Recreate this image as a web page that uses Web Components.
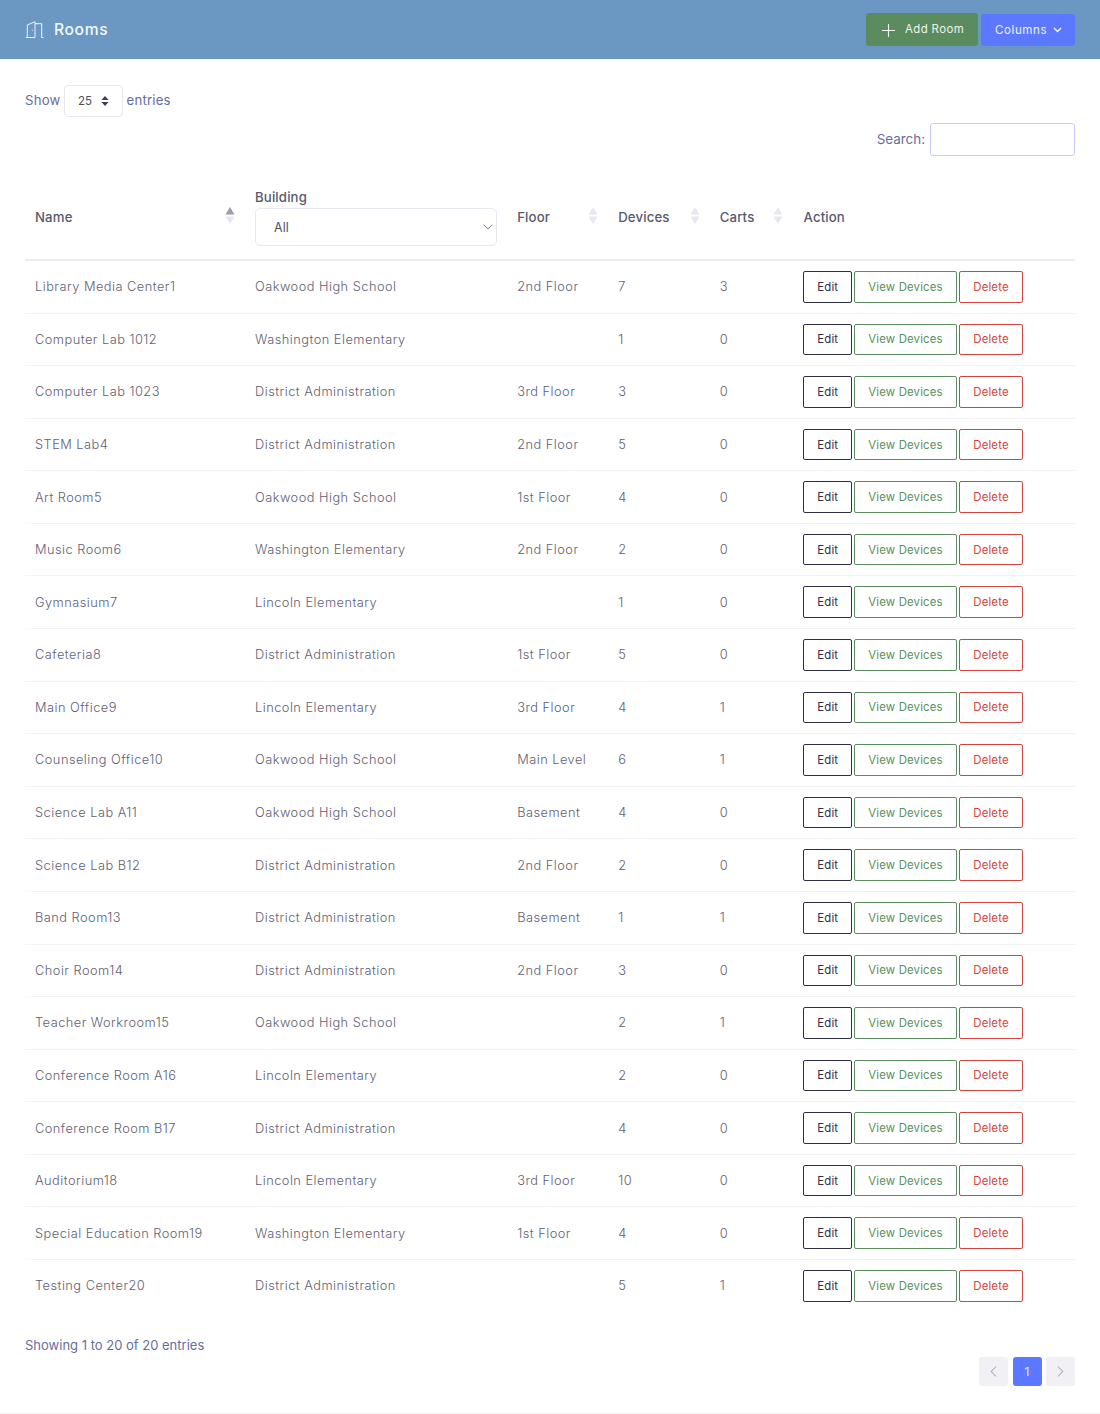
<!DOCTYPE html>
<html><head><meta charset="utf-8">
<style>html,body{margin:0;padding:0;background:#fff}body{font-family:Inter,"Liberation Sans",sans-serif}</style>
</head><body>
<rooms-app></rooms-app>
<script>
const FONT='Inter,"Liberation Sans",sans-serif';
const COLS='220px 262.2px 101px 101.5px 83.8px 281.5px';
const rows=[["Library Media Center1","Oakwood High School","2nd Floor","7","3"],["Computer Lab 1012","Washington Elementary","","1","0"],["Computer Lab 1023","District Administration","3rd Floor","3","0"],["STEM Lab4","District Administration","2nd Floor","5","0"],["Art Room5","Oakwood High School","1st Floor","4","0"],["Music Room6","Washington Elementary","2nd Floor","2","0"],["Gymnasium7","Lincoln Elementary","","1","0"],["Cafeteria8","District Administration","1st Floor","5","0"],["Main Office9","Lincoln Elementary","3rd Floor","4","1"],["Counseling Office10","Oakwood High School","Main Level","6","1"],["Science Lab A11","Oakwood High School","Basement","4","0"],["Science Lab B12","District Administration","2nd Floor","2","0"],["Band Room13","District Administration","Basement","1","1"],["Choir Room14","District Administration","2nd Floor","3","0"],["Teacher Workroom15","Oakwood High School","","2","1"],["Conference Room A16","Lincoln Elementary","","2","0"],["Conference Room B17","District Administration","","4","0"],["Auditorium18","Lincoln Elementary","3rd Floor","10","0"],["Special Education Room19","Washington Elementary","1st Floor","4","0"],["Testing Center20","District Administration","","5","1"]];
function def(name,html,after){customElements.define(name,class extends HTMLElement{constructor(){super();this.attachShadow({mode:'open'});}connectedCallback(){this.shadowRoot.innerHTML=typeof html==='function'?html(this):html;if(after)after(this)}})}

def('top-bar',`<style>:host{display:flex;align-items:center;height:59px;background:#6b98c2;padding:0 25px;box-sizing:border-box;font-family:${FONT}}
.t{display:flex;align-items:center;gap:10px;color:#f4f7fb;font-size:15.6px;font-weight:500;letter-spacing:.65px;margin-right:auto}
svg{display:block}
.add,.col{display:flex;align-items:center;box-sizing:border-box;border-radius:3px;color:#eef3ee;font-size:11.4px;letter-spacing:.4px}
.add{height:33px;width:112px;background:#5b8c5f;padding-left:16px;gap:10px;margin-right:3px;padding-bottom:2px}
.add svg{margin-top:3px}
.col{height:32px;width:94px;background:#5c78ff;padding-left:14px;gap:6px;font-size:11.6px;letter-spacing:.55px;color:#f0f3ff}</style>
<div class="t"><svg width="19" height="18" viewBox="0 0 19 18" fill="none" stroke="#eef3f8" stroke-width="1"><path d="M.7 16.5H10M2.3 16.5V4L10 .7V16.5M10 2.7H16.7V16.5H18.5"/><path d="M7.3 8.8v1"/></svg><span>Rooms</span></div>
<div class="add"><svg width="13" height="13" viewBox="0 0 13 13" stroke="#f2f6f2" stroke-width="1.1"><path d="M6.5 0v13M0 6.5h13"/></svg><span>Add Room</span></div>
<div class="col"><span>Columns</span><svg width="9" height="6" viewBox="0 0 9 6" fill="none" stroke="#f0f3ff" stroke-width="1.5"><path d="M1 1l3.5 3.5L8 1"/></svg></div>`);

def('length-filter',`<style>:host{display:flex;align-items:center;font-family:${FONT};font-size:13.2px;line-height:30px;color:#676d9f;gap:3.5px;height:32px}
.o{display:block;margin-top:-3px;letter-spacing:.2px}
.s{box-sizing:border-box;width:59px;height:32px;border:1px solid #e6e7f0;border-radius:4px;display:flex;align-items:center;padding-left:13px;gap:9px;color:#4d4f63;font-size:11.5px}
svg{display:block}</style><span class="o">Show</span><div class="s"><span>25</span><svg width="8" height="10" viewBox="0 0 8 10" fill="#3d3f55"><path d="M4 0l3.6 4H.4zM4 10L.4 6h7.2z"/></svg></div><span class="o">entries</span>`);

def('search-filter',`<style>:host{display:flex;justify-content:flex-end;align-items:center;gap:5px;font-family:${FONT};font-size:13.4px;color:#676d9f}
span{display:block;margin-top:-2px}
.i{box-sizing:border-box;width:145px;height:33px;border:1px solid #c3cdfb;border-radius:3px;background:#fff}</style><span>Search:</span><div class="i"></div>`);

def('sort-mark',`<style>:host{display:block;width:10px;height:17px;margin-top:-2px}svg{display:block}</style><svg width="10" height="17" viewBox="0 0 10 17"></svg>`,el=>{
 const a=el.hasAttribute('up');el.shadowRoot.querySelector('svg').innerHTML=`<path d="M5 0l4.5 7.6H.5z" fill="${a?'#9c9eab':'#e7e8ed'}"/><path d="M5 17L.5 9.4h9z" fill="#e7e8ed"/>`;});

def('table-head',`<style>:host{display:grid;grid-template-columns:${COLS};height:98px;border-bottom:2px solid #ebecf2;box-sizing:border-box;font-family:${FONT};font-size:13.2px;font-weight:500;color:#575a70;letter-spacing:.15px}
.c{display:flex;align-items:center;justify-content:space-between;padding:11px 10px 0;box-sizing:border-box}
.b{display:block;padding:23px 10px 0}
.b .l{height:22px;line-height:22px}
.sel{box-sizing:border-box;height:38px;width:242px;border:1px solid #e8e9f0;border-radius:5px;display:flex;align-items:center;justify-content:space-between;padding:0 3px 0 18px;font-weight:400;font-size:12.4px;color:#4f5166}
svg{display:block}</style>
<div class="c"><span>Name</span><sort-mark up></sort-mark></div>
<div class="b"><div class="l">Building</div><div class="sel"><span>All</span><svg width="10" height="6" viewBox="0 0 10 6" fill="none" stroke="#7b7d8e" stroke-width="1"><path d="M.7.7L5 5 9.3.7"/></svg></div></div>
<div class="c"><span>Floor</span><sort-mark></sort-mark></div>
<div class="c"><span>Devices</span><sort-mark></sort-mark></div>
<div class="c"><span>Carts</span><sort-mark></sort-mark></div>
<div class="c"><span>Action</span></div>`);

def('action-button',`<style>:host{display:flex;align-items:center;justify-content:center;box-sizing:border-box;height:31.6px;border:1px solid currentColor;border-radius:2px;font-family:${FONT};font-size:11.4px;letter-spacing:.15px}</style><slot></slot>`);

def('room-row',el=>`<style>:host{display:grid;grid-template-columns:${COLS};height:52.58px;box-sizing:border-box;border-bottom:1px solid #f3f3f7;align-items:center;font-family:${FONT};font-size:12.8px;font-weight:300;color:#5f6174;letter-spacing:.48px}
:host(:last-child){border-bottom-color:transparent}
.c{padding:0 10px;white-space:nowrap}.a{display:flex;gap:2px;padding:0 10px;font-weight:400}
.e{width:48.5px;color:#2e3045}.v{width:103px;color:#5b8f60}.d{width:64px;color:#d2443f}</style>
<div class="c">${el.getAttribute('n')}</div><div class="c">${el.getAttribute('b')}</div><div class="c">${el.getAttribute('f')||''}</div><div class="c">${el.getAttribute('dv')}</div><div class="c">${el.getAttribute('ct')}</div>
<div class="a"><action-button class="e">Edit</action-button><action-button class="v">View Devices</action-button><action-button class="d">Delete</action-button></div>`);

def('page-bar',`<style>:host{display:flex;justify-content:space-between;font-family:${FONT};font-size:13px;color:#676d9f;height:101px;box-sizing:border-box;border-bottom:1px solid #f3f3f7;margin:0 -25px;padding:0 25px}
.i{padding-top:22px;height:20px;line-height:20px}
.p{display:flex;gap:4.5px;padding-top:44px;height:29px}
.p div{box-sizing:border-box;width:29px;height:29px;border-radius:3px;background:#f0f0f5;display:flex;align-items:center;justify-content:center;color:#b5b6c3}
.p .on{background:#5c78ff;color:#e7ebff;font-size:12px}svg{display:block}</style>
<div class="i">Showing 1 to 20 of 20 entries</div>
<div class="p"><div><svg width="7" height="11" viewBox="0 0 7 11" fill="none" stroke="#b5b6c3" stroke-width="1.1"><path d="M6 .7L1.2 5.5 6 10.3"/></svg></div><div class="on">1</div><div><svg width="7" height="11" viewBox="0 0 7 11" fill="none" stroke="#b5b6c3" stroke-width="1.1"><path d="M1 .7l4.8 4.8L1 10.3"/></svg></div></div>`);

def('rooms-app',`<style>:host{display:block;height:1414px;overflow:hidden}.m{padding:26px 25px 0}search-filter{margin:6px 0 7px}</style>
<top-bar></top-bar><div class="m"><length-filter></length-filter><search-filter></search-filter><table-head></table-head><div id="r"></div><page-bar></page-bar></div>`,el=>{
 const r=el.shadowRoot.getElementById('r');
 rows.forEach(x=>{const e=document.createElement('room-row');['n','b','f','dv','ct'].forEach((k,i)=>e.setAttribute(k,x[i]));r.appendChild(e)});
});
</script></body></html>
